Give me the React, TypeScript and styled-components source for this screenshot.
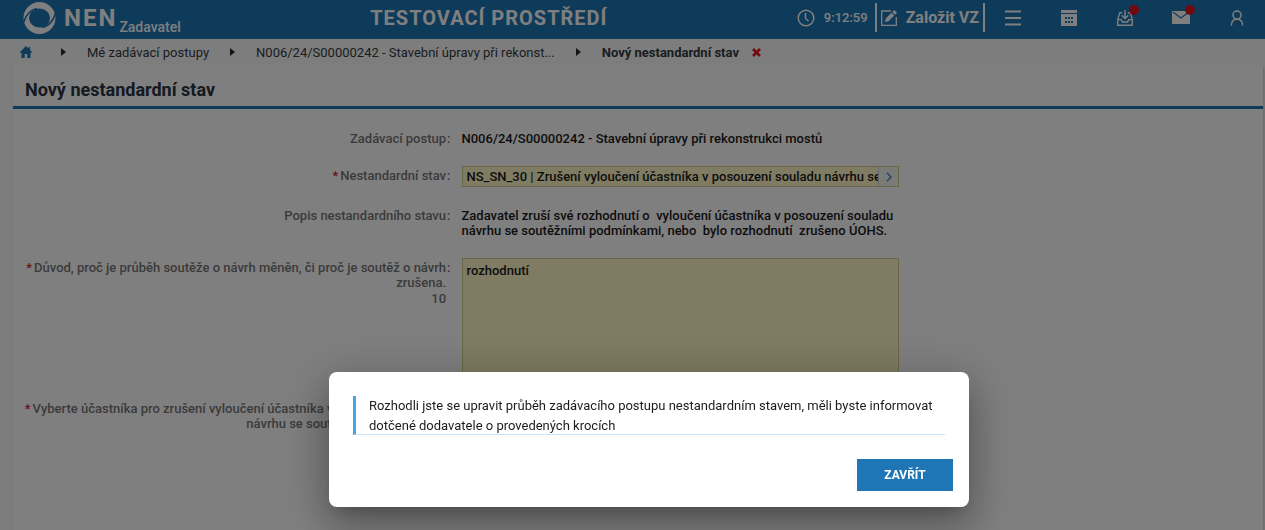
import React from 'react';
import styled, { createGlobalStyle, css } from 'styled-components';

const GlobalStyle = createGlobalStyle`
  *, *::before, *::after { box-sizing: border-box; }
  body {
    margin: 0;
    background: #fafafa;
    color: #1a1a1a;
    font-family: Roboto, "Liberation Sans", sans-serif;
    font-size: 13px;
    line-height: 15px;
  }
  button, input, textarea { font: inherit; color: inherit; letter-spacing: inherit; }
`;

const Page = styled.div`
  display: flex;
  flex-direction: column;
  min-height: 100vh;
`;

const Header = styled.header`
  display: flex;
  align-items: center;
  height: 39px;
  padding-bottom: 4px;
  background: #1e76b6;
  color: #fff;
`;

const Brand = styled.a`
  display: flex;
  align-items: center;
  padding-left: 23px;
  color: inherit;
  text-decoration: none;
`;

const BrandName = styled.span`
  margin-left: 8px;
  font-size: 24px;
  line-height: 32px;
  font-weight: 700;
  letter-spacing: 2px;
`;

const BrandRole = styled.span`
  align-self: flex-end;
  padding: 20px 0 0 2px;
  font-size: 14px;
  font-weight: 500;
`;

const Environment = styled.div`
  flex: 1;
  text-align: center;
  font-size: 20px;
  line-height: 24px;
  font-weight: 700;
  letter-spacing: 1px;
`;

const Clock = styled.div`
  display: flex;
  align-items: center;
  gap: 9px;
  margin-right: 7px;
  font-weight: 500;
`;

const CreateButton = styled.button`
  display: flex;
  align-items: center;
  gap: 9px;
  height: 29px;
  padding: 0 4px;
  border: solid #fff;
  border-width: 0 2px;
  background: none;
  font-size: 16px;
  font-weight: 700;
`;

const HeaderButton = styled.button`
  display: flex;
  align-items: center;
  justify-content: center;
  position: relative;
  width: 56px;
  height: 35px;
  padding: 0;
  border: 0;
  background: none;
`;

const Badge = styled.span`
  position: absolute;
  top: 5px;
  right: 14px;
  width: 10px;
  height: 10px;
  border-radius: 50%;
  background: #e0141c;
`;

const Breadcrumbs = styled.nav`
  display: flex;
  align-items: center;
  gap: 21px;
  height: 26px;
  padding-left: 20px;
  color: #333a44;
`;

const crumb = css`
  color: inherit;
  text-decoration: none;
  white-space: nowrap;
`;
const Crumb = styled.a`${crumb}`;
const HomeCrumb = styled.a`
  display: flex;
  margin-right: 8px;
  color: #1e76b6;
`;
const CurrentCrumb = styled.span`
  ${crumb}
  display: flex;
  align-items: center;
  gap: 13px;
  font-weight: 700;
`;
const CloseTab = styled.button`
  display: flex;
  padding: 0;
  border: 0;
  background: none;
`;

const Panel = styled.main`
  flex: 1;
  margin: 0 2px 0 13px;
  background: #fff;
  box-shadow: 1px 3px 3px rgba(0, 0, 0, 0.2);
`;

const Title = styled.h1`
  margin: 0;
  padding: 13px 12px 4px;
  border-bottom: 3px solid #1e76b6;
  color: #2a3340;
  font-size: 18px;
  line-height: 24px;
  font-weight: 700;
`;

const Form = styled.form`
  display: flex;
  flex-direction: column;
  padding-top: 22px;
  font-weight: 500;
`;

const Row = styled.div<{ $after: number }>`
  display: grid;
  grid-template-columns: 35% 35%;
  column-gap: 11px;
  align-items: start;
  margin-bottom: ${(p) => p.$after}px;
`;

const LabelCell = styled.div<{ $top?: boolean }>`
  display: flex;
  justify-content: flex-end;
  gap: 1px;
  padding-left: 11px;
  padding-top: ${(p) => (p.$top ? 2 : 0)}px;
  color: #777;
  text-align: right;
`;

const Required = styled.span`
  color: #d0202a;
  margin-right: 2px;
`;

const Counter = styled.span`
  display: block;
  margin-top: 1px;
`;

const Output = styled.output`
  white-space: pre-wrap;
`;

const fieldLook = css`
  border: 1px solid #d5cf8c;
  background: #fff8c6;
`;

const Lookup = styled.div`
  ${fieldLook}
  display: flex;
  height: 21px;
`;

const LookupInput = styled.input`
  flex: 1;
  min-width: 0;
  padding: 0 0 0 4px;
  border: 0;
  outline: 0;
  background: none;
`;

const LookupButton = styled.button`
  display: flex;
  align-items: center;
  justify-content: center;
  width: 20px;
  padding: 0;
  border: 0;
  border-left: 1px solid #c6d3e0;
  background: #f4f4f0;
`;

const TextArea = styled.textarea`
  ${fieldLook}
  display: block;
  width: 100%;
  height: 120px;
  padding: 4px;
  outline: 0;
  resize: none;
`;

const Overlay = styled.div`
  position: fixed;
  inset: 0;
  display: flex;
  align-items: flex-end;
  justify-content: center;
  padding: 0 0 23px 33px;
  background: rgba(0, 0, 0, 0.5);
`;

const Dialog = styled.div`
  width: 640px;
  padding: 24px 16px 16px 24px;
  border-radius: 8px;
  background: #fff;
  box-shadow: 0 11px 15px -7px rgba(0, 0, 0, 0.2), 0 24px 38px 3px rgba(0, 0, 0, 0.14),
    0 9px 46px 8px rgba(0, 0, 0, 0.2);
`;

const Message = styled.p`
  height: 39px;
  margin: 0 8px 24px 0;
  padding-left: 13px;
  border-left: 3px solid #42a5e5;
  border-bottom: 1px solid #c9e5f7;
  color: #1c1c1c;
  line-height: 20px;
`;

const DialogActions = styled.div`
  display: flex;
  justify-content: flex-end;
`;

const PrimaryButton = styled.button`
  min-width: 96px;
  height: 32px;
  border: 0;
  background: #1e76b6;
  color: #fff;
  font-size: 12px;
  font-weight: 700;
`;

const Logo = () => (
  <svg width="33" height="34" viewBox="0 0 33 34" aria-hidden="true">
    <path
      fillRule="evenodd"
      fill="#fff"
      d="M16.500 1a16 16 0 1 1 0 32a16 16 0 1 1 0-32zM16.500 7.500a10.500 9.500 0 1 0 0 19a10.500 9.500 0 1 0 0-19z"
    />
    <path d="M0 23C2 16 6 9 14 7.500M33 11C31 18 27 25 19 26.500" fill="none" stroke="#1e76b6" strokeWidth="1.600" />
  </svg>
);

const ClockIcon = () => (
  <svg width="18" height="18" viewBox="0 0 18 18" fill="none" stroke="#fff" strokeWidth="1.500" aria-hidden="true">
    <circle cx="9" cy="9" r="7.800" />
    <path d="M8.500 4v5.500l3 2.500" />
  </svg>
);

const EditIcon = () => (
  <svg width="16" height="16" viewBox="0 0 16 16" aria-hidden="true">
    <path d="M10 1H.7v14.300h14.600V7" fill="none" stroke="#fff" strokeWidth="1.300" />
    <path d="M4 12l.8-3.600 5.700-5.700 2.800 2.800-5.700 5.700zM11.200 2l1.500-1.500q.6-.5 1.200 0l1.600 1.600q.5.600 0 1.200L14 4.800z" fill="#fff" />
  </svg>
);

const MenuIcon = () => (
  <svg width="16" height="16" viewBox="0 0 16 16" stroke="#fff" strokeWidth="2" aria-hidden="true">
    <path d="M0 1.500h16M0 8h16M0 14.500h16" />
  </svg>
);

const CalendarIcon = () => (
  <svg width="16" height="16" viewBox="0 0 16 16" aria-hidden="true">
    <path d="M0 0h16v3H0zM0 4h16v12H0z" fill="#fff" />
    <path d="M4 7h2v2H4zM7 7h2v2H7zM10 7h2v2h-2zM4 11h2v2H4zM7 11h2v2H7zM10 11h2v2h-2z" fill="#1e76b6" />
  </svg>
);

const InboxIcon = () => (
  <svg width="16" height="16" viewBox="0 0 17 17" fill="none" stroke="#fff" strokeWidth="1.500" aria-hidden="true">
    <path d="M5.500 3H3L.8 10v6.200h15.400V10L14 3h-2.500M.8 10.200H4.500l1.300 2.600h5.400l1.300-2.600h3.700" />
    <path d="M8.500 0v8.500M5 5.500l3.500 3.500L12 5.500" />
  </svg>
);

const MailIcon = () => (
  <svg width="18" height="13" viewBox="0 0 18 13" aria-hidden="true">
    <path d="M0 0h18v13H0z" fill="#fff" />
    <path d="M1 1l8 6 8-6" fill="none" stroke="#1e76b6" strokeWidth="1.200" />
  </svg>
);

const UserIcon = () => (
  <svg width="14" height="16" viewBox="0 0 14 17" fill="none" stroke="#fff" strokeWidth="1.600" aria-hidden="true">
    <circle cx="7" cy="5.400" r="4.300" />
    <path d="M1 16.500c0-4 2-6.700 6-6.700s6 2.700 6 6.700" />
  </svg>
);

const HomeIcon = () => (
  <svg width="12" height="12" viewBox="0 0 12 12" fill="currentColor" aria-hidden="true">
    <path d="M6 0l2.500 2.400V1h1.600v3L12 6v.7h-1.500V12H7.300V8H4.700v4H1.500V6.700H0V6z" />
  </svg>
);

const Arrow = () => (
  <svg width="5" height="8" viewBox="0 0 5 8" fill="#222a33" aria-hidden="true">
    <path d="M0 0l5 4-5 4z" />
  </svg>
);

const CloseIcon = () => (
  <svg width="9" height="9" viewBox="0 0 9 9" stroke="#e0141c" strokeWidth="2.600" aria-hidden="true">
    <path d="M1 1l7 7M8 1L1 8" />
  </svg>
);

const ChevronIcon = () => (
  <svg width="6" height="10" viewBox="0 0 6 10" fill="none" stroke="#3b82c4" strokeWidth="1.300" aria-hidden="true">
    <path d="M1 .8L5 5 1 9.200" />
  </svg>
);

type LabelProps = { text: string; htmlFor: string; required?: boolean; counter?: number; top?: boolean };

const FieldLabel = ({ text, htmlFor, required, counter, top }: LabelProps) => (
  <LabelCell $top={top}>
    <label htmlFor={htmlFor}>
      {required && <Required>*</Required>}
      {text}
      {counter !== undefined && <Counter>{counter}</Counter>}
    </label>
    <span>:</span>
  </LabelCell>
);

export default function App() {
  return (
    <>
      <GlobalStyle />
      <Page>
        <Header>
          <Brand href="#">
            <Logo />
            <BrandName>NEN</BrandName>
            <BrandRole>Zadavatel</BrandRole>
          </Brand>
          <Environment>TESTOVACÍ PROSTŘEDÍ</Environment>
          <Clock>
            <ClockIcon />
            <time>9:12:59</time>
          </Clock>
          <CreateButton type="button">
            <EditIcon />
            Založit VZ
          </CreateButton>
          <HeaderButton type="button" aria-label="Menu"><MenuIcon /></HeaderButton>
          <HeaderButton type="button" aria-label="Kalendář"><CalendarIcon /></HeaderButton>
          <HeaderButton type="button" aria-label="Doručené"><InboxIcon /><Badge /></HeaderButton>
          <HeaderButton type="button" aria-label="Zprávy"><MailIcon /><Badge /></HeaderButton>
          <HeaderButton type="button" aria-label="Uživatel"><UserIcon /></HeaderButton>
        </Header>
        <Breadcrumbs>
          <HomeCrumb href="#" aria-label="Domů"><HomeIcon /></HomeCrumb>
          <Arrow />
          <Crumb href="#">Mé zadávací postupy</Crumb>
          <Arrow />
          <Crumb href="#">N006/24/S00000242 - Stavební úpravy při rekonst...</Crumb>
          <Arrow />
          <CurrentCrumb>
            Nový nestandardní stav
            <CloseTab type="button" aria-label="Zavřít záložku"><CloseIcon /></CloseTab>
          </CurrentCrumb>
        </Breadcrumbs>
        <Panel>
          <Title>Nový nestandardní stav</Title>
          <Form>
            <Row $after={20}>
              <FieldLabel htmlFor="procedure" text="Zadávací postup" />
              <Output id="procedure">N006/24/S00000242 - Stavební úpravy při rekonstrukci mostů</Output>
            </Row>
            <Row $after={21}>
              <FieldLabel htmlFor="state" text="Nestandardní stav" required top />
              <Lookup>
                <LookupInput
                  id="state"
                  defaultValue="NS_SN_30 | Zrušení vyloučení účastníka v posouzení souladu návrhu se soutěžními podmínkami"
                />
                <LookupButton type="button" aria-label="Vybrat"><ChevronIcon /></LookupButton>
              </Lookup>
            </Row>
            <Row $after={20}>
              <FieldLabel htmlFor="description" text="Popis nestandardního stavu" />
              <Output id="description">
                {'Zadavatel zruší své rozhodnutí o  vyloučení účastníka v posouzení souladu návrhu se soutěžními podmínkami, nebo  bylo rozhodnutí  zrušeno ÚOHS.'}
              </Output>
            </Row>
            <Row $after={21}>
              <FieldLabel
                htmlFor="reason"
                text="Důvod, proč je průběh soutěže o návrh měněn, či proč je soutěž o návrh zrušena."
                required
                counter={10}
                top
              />
              <TextArea id="reason" defaultValue="rozhodnutí" />
            </Row>
            <Row $after={20}>
              <FieldLabel
                htmlFor="participant"
                text="Vyberte účastníka pro zrušení vyloučení účastníka v posouzení souladu návrhu se soutěžními podmínkami"
                required
                top
              />
              <Output id="participant" />
            </Row>
          </Form>
        </Panel>
      </Page>
      <Overlay>
        <Dialog role="dialog" aria-modal="true" aria-describedby="notice">
          <Message id="notice">
            Rozhodli jste se upravit průběh zadávacího postupu nestandardním stavem, měli byste informovat dotčené
            dodavatele o provedených krocích
          </Message>
          <DialogActions>
            <PrimaryButton type="button">ZAVŘÍT</PrimaryButton>
          </DialogActions>
        </Dialog>
      </Overlay>
    </>
  );
}
